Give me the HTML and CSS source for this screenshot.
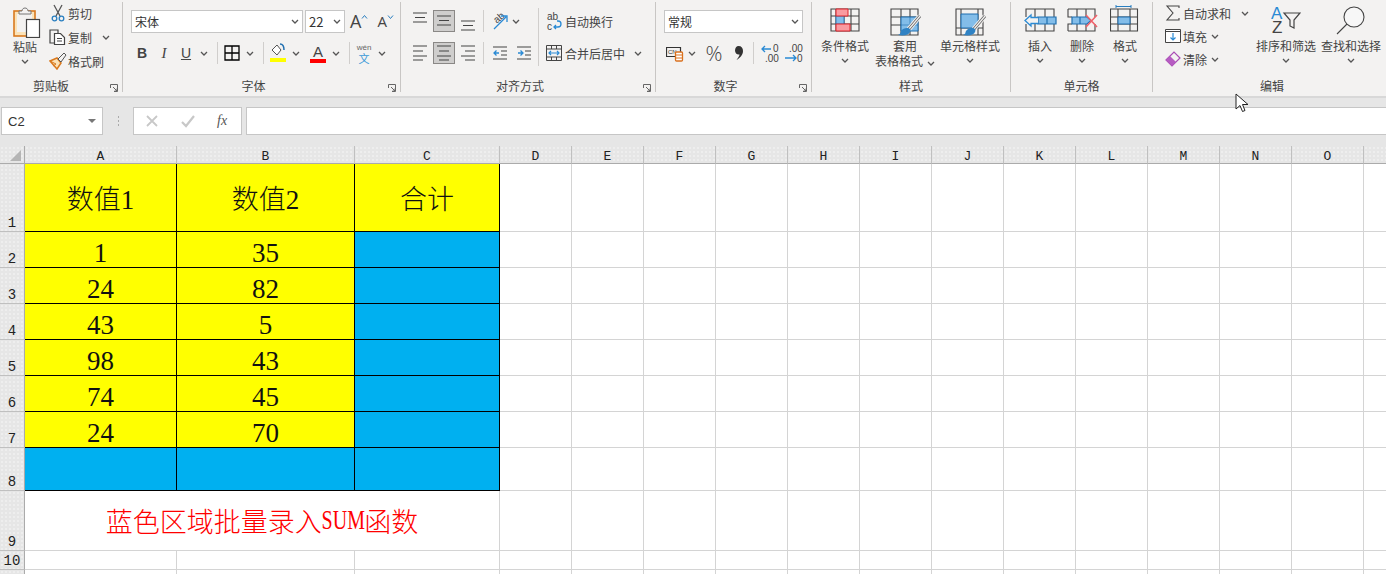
FILE: index.html
```html
<!DOCTYPE html>
<html lang="zh-CN">
<head>
    <meta charset="UTF-8">
    <meta name="viewport" content="width=device-width, initial-scale=1.0">
    <title>蓝色区域批量录入SUM函数</title>
    <link rel="stylesheet" href="styles.css">
</head>
<body>

<svg class="defs" aria-hidden="true">
    <symbol id="chev" viewBox="0 0 8 5"><path d="M1 1l3 3 3-3" fill="none" stroke="#555" stroke-width="1.3"/></symbol>
    <symbol id="launcher" viewBox="0 0 8 8"><path d="M.5 4V.5H7.5V7.5H4M3 3l4 4M7 4.500V7H4.500" fill="none" stroke="#666"/></symbol>
    <symbol id="brush" viewBox="0 0 34 34">
        <path d="M32 11L21 24" stroke="#f3f2f1" stroke-width="5"/>
        <path d="M32 11L21 24" stroke="#666" stroke-width="2.800"/>
        <path d="M32 11L21 24" stroke="#f3f2f1" stroke-width="1.200"/>
        <path d="M19 23c3 0 4 2 3 4-1 3-6 4-12 3 3-1 2-2 3-4 1-2 4-3 6-3z" fill="#2f82c4"/>
    </symbol>
</svg>

<!-- ribbon -->
<div class="ribbon">
    <section class="group group-clip">
        <div class="body row-body">
            <div class="big-btn paste-btn">
                <svg class="paste-icon" width="30" height="32" viewBox="0 0 30 32">
                    <rect x="2" y="5" width="21" height="25" fill="#fbe3b8" stroke="#d9791e" stroke-width="1.600"/>
                    <rect x="5" y="8" width="15" height="18" fill="#f3f2f1"/>
                    <path d="M7 8V5h3c0-4 6-4 6 0h3v3z" fill="#f3f2f1" stroke="#777"/>
                    <rect x="14.500" y="13.500" width="13" height="18" fill="#fff" stroke="#444" stroke-width="1.200"/>
                </svg>
                <span class="big-label">粘贴</span>
                <svg class="chev chev-big"><use href="#chev"/></svg>
            </div>
            <div class="clip-list">
                <div class="small-row">
                    <svg class="small-icon" width="18" height="18" viewBox="0 0 18 18">
                        <path d="M5 1l6 11M13 1L7 12" stroke="#555" stroke-width="1.300" fill="none"/>
                        <circle cx="5.500" cy="14.500" r="2.300" fill="none" stroke="#2a7fc0" stroke-width="1.300"/>
                        <circle cx="12.500" cy="14.500" r="2.300" fill="none" stroke="#2a7fc0" stroke-width="1.300"/>
                    </svg>
                    <span>剪切</span>
                </div>
                <div class="small-row">
                    <svg class="small-icon" width="18" height="18" viewBox="0 0 18 18">
                        <path d="M5 15H1V2h8v3" fill="none" stroke="#444" stroke-width="1.200"/>
                        <path d="M5.500 5.500h6l4 4v7h-10z" fill="#fff" stroke="#444" stroke-width="1.200"/>
                        <path d="M8 10.500h5M8 13h5" stroke="#444"/>
                    </svg>
                    <span>复制</span>
                    <svg class="chev chev-copy"><use href="#chev"/></svg>
                </div>
                <div class="small-row">
                    <svg class="small-icon" width="18" height="18" viewBox="0 0 18 18">
                        <path d="M1 9l7-3 4 5-4 6z" fill="#fbe3b8" stroke="#d9791e" stroke-width="1.500"/>
                        <path d="M1 9l6 3M4 14l3-2" stroke="#d9791e"/>
                        <path d="M9 7l6-6 2 2-5 7z" fill="#f3f2f1" stroke="#555"/>
                    </svg>
                    <span>格式刷</span>
                </div>
            </div>
        </div>
        <div class="group-label label-clip">剪贴板</div>
        <svg class="launcher"><use href="#launcher"/></svg>
    </section>

    <section class="group group-font">
        <div class="body col-body">
            <div class="tool-row">
                <div class="select font-name">宋体<svg class="chev"><use href="#chev"/></svg></div>
                <div class="select font-size">22<svg class="chev"><use href="#chev"/></svg></div>
                <span class="grow-a">A<svg width="7" height="4" viewBox="0 0 7 4"><path d="M1 3.500l2.500-3 2.500 3" fill="none" stroke="#2a7fc0"/></svg></span>
                <span class="shrink-a">A<svg width="7" height="4" viewBox="0 0 7 4"><path d="M1 .5l2.500 3 2.500-3" fill="none" stroke="#2a7fc0"/></svg></span>
            </div>
            <div class="tool-row">
                <span class="tool fmt-b">B</span>
                <span class="tool fmt-i">I</span>
                <span class="tool fmt-u">U</span>
                <svg class="chev tool-chev"><use href="#chev"/></svg>
                <span class="sep sep-a"></span>
                <span class="tool">
                    <svg width="16" height="16" viewBox="0 0 16 16"><path d="M1 1h14v14H1zM8 1v14M1 8h14" fill="none" stroke="#000" stroke-width="1.300"/></svg>
                </span>
                <svg class="chev tool-chev"><use href="#chev"/></svg>
                <span class="sep sep-a"></span>
                <span class="tool tool-fill">
                    <svg width="16" height="20" viewBox="0 0 16 20">
                        <path d="M2 7l5-5 4 5-4 5z" fill="#fff" stroke="#555"/>
                        <path d="M10 1c3 0 4 3 4 6" fill="none" stroke="#1f6fb0" stroke-width="1.500"/>
                        <rect y="15" width="16" height="4" fill="#ffff00"/>
                    </svg>
                </span>
                <svg class="chev tool-chev"><use href="#chev"/></svg>
                <span class="tool tool-color">
                    <span class="color-a">A</span>
                    <span class="color-bar"></span>
                </span>
                <svg class="chev tool-chev"><use href="#chev"/></svg>
                <span class="sep sep-b"></span>
                <span class="tool tool-wen">
                    <span class="wen-top">wén</span>
                    <span class="wen-bottom">文</span>
                </span>
                <svg class="chev tool-chev"><use href="#chev"/></svg>
            </div>
        </div>
        <div class="group-label label-dialog">字体</div>
        <svg class="launcher"><use href="#launcher"/></svg>
    </section>

    <section class="group group-align">
        <div class="body row-body">
            <div class="align-left">
                <div class="tool-row">
                    <span class="tool al"><svg width="14" height="22" viewBox="0 0 14 22"><path d="M0 3h14M2 7.500h10M0 12h14" stroke="#444" stroke-width="1.200"/></svg></span>
                    <span class="tool al active"><svg width="14" height="22" viewBox="0 0 14 22"><path d="M0 6h14M2 10.500h10M0 15h14" stroke="#444" stroke-width="1.200"/></svg></span>
                    <span class="tool al"><svg width="14" height="22" viewBox="0 0 14 22"><path d="M0 11h14M2 15.500h10M0 20h14" stroke="#444" stroke-width="1.200"/></svg></span>
                    <span class="sep sep-c"></span>
                    <span class="tool al">
                        <svg width="18" height="20" viewBox="0 0 18 20">
                            <text class="rot-text" x="3" y="11" transform="rotate(-40 7 8)">ab</text>
                            <path d="M3 18L15 6M10 5h6v6" fill="none" stroke="#2a8ad4" stroke-width="1.300"/>
                        </svg>
                    </span>
                    <svg class="chev chev-tight"><use href="#chev"/></svg>
                </div>
                <div class="tool-row">
                    <span class="tool al"><svg width="14" height="16" viewBox="0 0 14 16"><path d="M0 1h14M0 6h10M0 11h14M0 15h10" stroke="#444" stroke-width="1.200"/></svg></span>
                    <span class="tool al active"><svg width="14" height="16" viewBox="0 0 14 16"><path d="M0 1h14M2 6h10M0 11h14M2 15h10" stroke="#444" stroke-width="1.200"/></svg></span>
                    <span class="tool al"><svg width="14" height="16" viewBox="0 0 14 16"><path d="M0 1h14M4 6h10M0 11h14M4 15h10" stroke="#444" stroke-width="1.200"/></svg></span>
                    <span class="sep sep-c"></span>
                    <span class="tool al"><svg width="14" height="14" viewBox="0 0 14 14"><path d="M0 1h14M8 5h6M8 9h6M0 13h14" stroke="#444" stroke-width="1.200"/><path d="M6 7H1M3.500 4.500L1 7l2.500 2.500" fill="none" stroke="#2a8ad4" stroke-width="1.300"/></svg></span>
                    <span class="tool al"><svg width="14" height="14" viewBox="0 0 14 14"><path d="M0 1h14M8 5h6M8 9h6M0 13h14" stroke="#444" stroke-width="1.200"/><path d="M1 7h5M3.500 4.500L6 7 3.500 9.500" fill="none" stroke="#2a8ad4" stroke-width="1.300"/></svg></span>
                </div>
            </div>
            <span class="sep sep-tall"></span>
            <div class="align-right">
                <div class="tool-row">
                    <span class="merge-icon">
                        <svg width="18" height="22" viewBox="0 0 18 22">
                            <text class="wrap-text" x="2" y="10">ab</text>
                            <text class="wrap-text" x="2" y="20">c</text>
                            <path d="M9 17h4c4 0 4-6 0-6h-1M11 15l-2 2 2 2" fill="none" stroke="#2a8ad4" stroke-width="1.300"/>
                        </svg>
                    </span>
                    <span>自动换行</span>
                </div>
                <div class="tool-row">
                    <span class="merge-icon">
                        <svg width="16" height="16" viewBox="0 0 16 16">
                            <path d="M.5.5h15v15H.5zM.5 4h15M.5 12h15M5.500.5V4M10.500.5V4M5.500 12v3.500M10.500 12v3.500" fill="none" stroke="#444"/>
                            <path d="M3 8h10M5 6L3 8l2 2M11 6l2 2-2 2" fill="none" stroke="#2a8ad4" stroke-width="1.200"/>
                        </svg>
                    </span>
                    <span>合并后居中</span>
                    <svg class="chev chev-merge"><use href="#chev"/></svg>
                </div>
            </div>
        </div>
        <div class="group-label label-dialog">对齐方式</div>
        <svg class="launcher"><use href="#launcher"/></svg>
    </section>

    <section class="group group-number">
        <div class="body col-body">
            <div class="tool-row">
                <div class="select number-format">常规<svg class="chev"><use href="#chev"/></svg></div>
            </div>
            <div class="tool-row">
                <span class="tool">
                    <svg width="18" height="18" viewBox="0 0 18 18">
                        <path d="M.5 3.500h14v9H.5z" fill="none" stroke="#333" stroke-width="1.200"/>
                        <text class="money-text" x="2" y="10">CN</text>
                        <rect x="9.500" y="8" width="7" height="9" rx="1" fill="#fff" stroke="#d9701e" stroke-width="1.300"/>
                        <path d="M9.500 11h7M9.500 14h7" stroke="#d9701e"/>
                    </svg>
                </span>
                <svg class="chev chev-money"><use href="#chev"/></svg>
                <span class="tool percent">%</span>
                <span class="tool comma">
                    <svg width="10" height="16" viewBox="0 0 10 16"><path d="M4.500 1C7.500 1 9 3 9 6c0 4-3 7-6.500 9 1.500-2 3-4 3-5.500C3 10 1 8 1 5.500 1 3 2.500 1 4.500 1z" fill="#333"/></svg>
                </span>
                <span class="sep sep-d"></span>
                <span class="tool dec dec-first">
                    <svg width="20" height="22" viewBox="0 0 20 22">
                        <text class="dec-text" x="13" y="10">0</text>
                        <text class="dec-text" x="5" y="20">.00</text>
                        <path d="M11 7H2M5 4L2 7l3 3" fill="none" stroke="#2a8ad4" stroke-width="1.300"/>
                    </svg>
                </span>
                <span class="tool dec">
                    <svg width="20" height="22" viewBox="0 0 20 22">
                        <text class="dec-text" x="5" y="10">.00</text>
                        <text class="dec-text" x="13" y="20">0</text>
                        <path d="M1 16h11M9 13l3 3-3 3" fill="none" stroke="#2a8ad4" stroke-width="1.300"/>
                    </svg>
                </span>
            </div>
        </div>
        <div class="group-label label-dialog">数字</div>
        <svg class="launcher"><use href="#launcher"/></svg>
    </section>

    <section class="group group-styles">
        <div class="body row-body">
            <div class="big-btn w-66">
                <svg class="big-icon" width="30" height="34" viewBox="0 0 30 34">
                    <path d="M1 4h28v22H1zM1 11h28M1 19h28M6 4v22M14 11v8M21 4v22" fill="none" stroke="#444" stroke-width="1.100"/>
                    <path d="M6 11h8v8H6z" fill="#83bde9" stroke="#1f6fb0" stroke-width=".8"/>
                    <path d="M6 4h12v7H6zM6 19h14v7H6z" fill="#fa9aa0" stroke="#e0252d"/>
                </svg>
                <span class="big-label">条件格式</span>
                <svg class="chev chev-big"><use href="#chev"/></svg>
            </div>
            <div class="big-btn w-54">
                <svg class="big-icon" width="34" height="34" viewBox="0 0 34 34">
                    <path d="M3 4h27v26H3zM3 12h27M3 20h27M13 4v26M22 4v26" fill="none" stroke="#444" stroke-width="1.100"/>
                    <path d="M13 12h17v14H13z" fill="#83bde9" stroke="#1f6fb0"/>
                    <path d="M22 12v14M13 20h17" stroke="#1f6fb0" stroke-width=".6"/>
                    <use href="#brush" width="34" height="34"/>
                </svg>
                <span class="big-label">套用</span>
                <span class="big-label">表格格式<svg class="chev chev-inline"><use href="#chev"/></svg></span>
            </div>
            <div class="big-btn w-76">
                <svg class="big-icon" width="34" height="34" viewBox="0 0 34 34">
                    <path d="M3 4h27v26H3zM3 23h27M8 4v26M25 4v26" fill="none" stroke="#444" stroke-width="1.100"/>
                    <path d="M8 9h17v14H8z" fill="#83bde9" stroke="#1f6fb0"/>
                    <use href="#brush" width="34" height="34"/>
                </svg>
                <span class="big-label">单元格样式</span>
                <svg class="chev chev-big"><use href="#chev"/></svg>
            </div>
        </div>
        <div class="group-label">样式</div>
    </section>

    <section class="group group-cells">
        <div class="body row-body">
            <div class="big-btn w-42">
                <svg class="big-icon" width="34" height="34" viewBox="0 0 34 34">
                    <path d="M3 12V4h28v8M3 19v7h28v-7M12 4v8M22 4v22M12 19v7" fill="none" stroke="#444" stroke-width="1.100"/>
                    <path d="M15 12h18v7H15zM24 12v7" fill="#83bde9" stroke="#1f6fb0" stroke-width="1.200"/>
                    <path d="M15 12.500H8V10l-6 5.500L8 21v-2.500h7" fill="#f3f2f1" stroke="#2a8ad4" stroke-width="1.300"/>
                </svg>
                <span class="big-label">插入</span>
                <svg class="chev chev-big"><use href="#chev"/></svg>
            </div>
            <div class="big-btn w-42">
                <svg class="big-icon" width="34" height="34" viewBox="0 0 34 34">
                    <path d="M3 4h27v8M3 4v8h4M3 26v-7h4M3 26h27v-7M12 4v8M21 4v8M12 19v7M21 19v7" fill="none" stroke="#444" stroke-width="1.100"/>
                    <path d="M7 12h15l4 3.500-4 3.500H7zM15 12v7" fill="#83bde9" stroke="#1f6fb0" stroke-width="1.200"/>
                    <path d="M21 10l11 12M32 10L21 22" stroke="#f0626a" stroke-width="1.600"/>
                </svg>
                <span class="big-label">删除</span>
                <svg class="chev chev-big"><use href="#chev"/></svg>
            </div>
            <div class="big-btn w-44">
                <svg class="big-icon" width="30" height="34" viewBox="0 0 30 34">
                    <path d="M.5 4h27v22H.5zM.5 12h27M.5 19h27M8 4v22M20 4v22" fill="none" stroke="#444" stroke-width="1.100"/>
                    <path d="M8 12h12v7H8z" fill="#83bde9" stroke="#1f6fb0"/>
                    <path d="M6 0v3M21 0v3M6 1.500h15" stroke="#2a7fc0"/>
                </svg>
                <span class="big-label">格式</span>
                <svg class="chev chev-big"><use href="#chev"/></svg>
            </div>
        </div>
        <div class="group-label">单元格</div>
    </section>

    <section class="group group-edit">
        <div class="body row-body">
            <div class="edit-list">
                <div class="small-row">
                    <svg class="small-icon" width="16" height="16" viewBox="0 0 16 16"><path d="M14 3V1H2l6 7-6 7h12v-2" fill="none" stroke="#444" stroke-width="1.100"/></svg>
                    <span>自动求和</span>
                    <svg class="chev chev-sum"><use href="#chev"/></svg>
                </div>
                <div class="small-row">
                    <svg class="small-icon" width="16" height="16" viewBox="0 0 16 16"><path d="M.5 1.500h15v13H.5zM.5 3.500h15" fill="#fff" stroke="#444"/><path d="M8 5v7M5.500 9.500L8 12l2.500-2.500" fill="none" stroke="#2a8ad4" stroke-width="1.200"/></svg>
                    <span>填充</span>
                    <svg class="chev chev-fill"><use href="#chev"/></svg>
                </div>
                <div class="small-row">
                    <svg class="small-icon" width="16" height="16" viewBox="0 0 16 16"><path d="M1 9l8-8 6 6-8 8z" fill="#f3f2f1" stroke="#a94cb4" stroke-width="1.200"/><path d="M1 9l4-4 6 6-4 4z" fill="#b65cc2"/></svg>
                    <span>清除</span>
                    <svg class="chev chev-fill"><use href="#chev"/></svg>
                </div>
            </div>
            <div class="big-btn w-60">
                <svg class="big-icon" width="30" height="34" viewBox="0 0 30 34">
                    <text class="sort-a" x="0" y="14">A</text>
                    <text class="sort-z" x="1" y="28">Z</text>
                    <path d="M13 8h16l-6 7v8l-4-2v-6z" fill="#f3f2f1" stroke="#444" stroke-width="1.200"/>
                </svg>
                <span class="big-label">排序和筛选</span>
                <svg class="chev chev-big"><use href="#chev"/></svg>
            </div>
            <div class="big-btn w-60 find-btn">
                <svg class="big-icon" width="34" height="34" viewBox="0 0 34 34">
                    <circle cx="20" cy="12" r="10" fill="#f7f7f7" stroke="#444" stroke-width="1.100"/>
                    <path d="M13 19L3 29" stroke="#444" stroke-width="1.100"/>
                </svg>
                <span class="big-label">查找和选择</span>
                <svg class="chev chev-big"><use href="#chev"/></svg>
            </div>
        </div>
        <div class="group-label edit-label">编辑</div>
    </section>
</div>

<!-- formula bar -->
<div class="formula-area">
    <div class="name-box">C2<span class="name-arrow"></span></div>
    <div class="grip"></div>
    <div class="fx-box">
        <svg width="14" height="14" viewBox="0 0 14 14"><path d="M2 2l10 10M12 2L2 12" stroke="#c8c8c8" stroke-width="1.800"/></svg>
        <svg width="14" height="14" viewBox="0 0 14 14"><path d="M1 8l4 4 8-10" fill="none" stroke="#c8c8c8" stroke-width="2.200"/></svg>
        <span class="fx-label">fx</span>
    </div>
    <div class="formula-input"></div>
</div>

<!-- sheet -->
<div class="sheet">
    <div class="corner"><span class="corner-mark"></span></div>
    <div class="col-head">A</div>
    <div class="col-head">B</div>
    <div class="col-head">C</div>
    <div class="col-rest">
        <span>D</span><span>E</span><span>F</span><span>G</span><span>H</span><span>I</span><span>J</span>
        <span>K</span><span>L</span><span>M</span><span>N</span><span>O</span><span></span>
    </div>

    <div class="row-head">1</div>
    <div class="cell yellow title">数值1</div>
    <div class="cell yellow title">数值2</div>
    <div class="cell yellow title">合计</div>
    <div class="rest"></div>

    <div class="row-head">2</div>
    <div class="cell yellow">1</div>
    <div class="cell yellow">35</div>
    <div class="cell blue"></div>
    <div class="rest"></div>

    <div class="row-head">3</div>
    <div class="cell yellow">24</div>
    <div class="cell yellow">82</div>
    <div class="cell blue"></div>
    <div class="rest"></div>

    <div class="row-head">4</div>
    <div class="cell yellow">43</div>
    <div class="cell yellow">5</div>
    <div class="cell blue"></div>
    <div class="rest"></div>

    <div class="row-head">5</div>
    <div class="cell yellow">98</div>
    <div class="cell yellow">43</div>
    <div class="cell blue"></div>
    <div class="rest"></div>

    <div class="row-head">6</div>
    <div class="cell yellow">74</div>
    <div class="cell yellow">45</div>
    <div class="cell blue"></div>
    <div class="rest"></div>

    <div class="row-head">7</div>
    <div class="cell yellow">24</div>
    <div class="cell yellow">70</div>
    <div class="cell blue"></div>
    <div class="rest"></div>

    <div class="row-head">8</div>
    <div class="cell blue"></div>
    <div class="cell blue"></div>
    <div class="cell blue"></div>
    <div class="rest"></div>

    <div class="row-head">9</div>
    <div class="note">蓝色区域批量录入<span class="note-latin">SUM</span>函数</div>
    <div class="rest"></div>

    <div class="row-head">10</div>
    <div class="blank"></div>
    <div class="blank"></div>
    <div class="blank"></div>
    <div class="rest"></div>

    <div class="row-head"></div>
    <div class="blank"></div>
    <div class="blank"></div>
    <div class="blank"></div>
    <div class="rest"></div>
</div>

<svg class="cursor" width="14" height="20" viewBox="0 0 14 20">
    <path d="M1 1v15l4-3.500 2.500 6 2.500-1-2.500-6H13z" fill="#fff" stroke="#222"/>
</svg>

</body>
</html>
```

FILE: styles.css
```css
body {
    margin: 0;
    height: 574px;
    overflow: hidden;
    position: relative;
    background: #fff;
    color: #444;
    font-family: "Noto Sans CJK SC", "Noto Sans", sans-serif;
    font-size: 12px;
}
.defs {
    display: none;
}

/* ribbon */
.ribbon {
    display: flex;
    height: 96px;
    background: #f3f2f1;
}
.group {
    position: relative;
    box-sizing: border-box;
    height: 90px;
    margin-top: 2px;
    border-right: 1px solid #c8c6c4;
    flex: none;
}
.group-clip { width: 123px; }
.group-font { width: 278px; padding-left: 8px; }
.group-align { width: 255px; padding-left: 7px; }
.group-number { width: 156px; padding-left: 8px; }
.group-styles { width: 199px; }
.group-cells { width: 142px; padding-left: 8px; }
.group-edit { width: 233px; padding-left: 11px; border-right: none; }

.body {
    height: 76px;
}
.row-body {
    display: flex;
}
.col-body {
    display: flex;
    flex-direction: column;
    gap: 10px;
    padding-top: 8px;
    box-sizing: border-box;
}
.group-label {
    position: absolute;
    left: 0;
    right: 0;
    bottom: -2px;
    height: 16px;
    line-height: 16px;
    text-align: center;
}
.label-clip {
    right: 20px;
}
.label-dialog {
    right: 16px;
}
.edit-label {
    left: 5px;
}
.launcher {
    position: absolute;
    right: 4px;
    bottom: 0;
    width: 8px;
    height: 8px;
}

.chev {
    width: 8px;
    height: 5px;
    flex: none;
}
.big-btn {
    display: flex;
    flex-direction: column;
    align-items: center;
    flex: none;
    padding-top: 3px;
    box-sizing: border-box;
    white-space: nowrap;
}
.big-icon {
    flex: none;
    margin-bottom: -1px;
}
.big-label {
    line-height: 15px;
    height: 15px;
}
.chev-big { margin-top: 5px; }
.chev-inline { margin-left: 4px; }
.w-42 { width: 42px; }
.w-44 { width: 44px; }
.w-54 { width: 54px; }
.w-60 { width: 60px; }
.w-66 { width: 66px; }
.w-76 { width: 76px; }

.paste-btn {
    width: 50px;
}
.paste-icon {
    margin: 1px 0 1px 4px;
}
.clip-list {
    display: flex;
    flex-direction: column;
    gap: 2px;
    margin-left: -1px;
}
.small-row {
    display: flex;
    align-items: center;
    height: 22px;
    white-space: nowrap;
}
.small-icon {
    flex: none;
    width: 18px;
    margin-right: 1px;
}
.chev-copy { margin-left: 10px; }
.chev-sum { margin-left: 10px; }
.chev-fill { margin-left: 4px; }

.tool-row {
    display: flex;
    align-items: center;
    height: 22px;
    white-space: nowrap;
}
.select {
    display: flex;
    align-items: center;
    justify-content: space-between;
    box-sizing: border-box;
    height: 23px;
    padding: 0 3px;
    background: #fff;
    border: 1px solid #c6c6c6;
    color: #333;
}
.font-name { width: 172px; }
.font-size { width: 40px; margin-left: 2px; font-size: 13px; }
.number-format { width: 139px; }
.grow-a, .shrink-a {
    display: flex;
    align-items: flex-start;
    font-family: "Open Sans", sans-serif;
    font-size: 16px;
    line-height: 20px;
}
.grow-a { margin-left: 5px; font-size: 18px; }
.shrink-a { margin-left: 9px; font-size: 15px; }
.grow-a svg, .shrink-a svg { margin-top: 4px; }

.tool {
    display: flex;
    align-items: center;
    justify-content: center;
    width: 22px;
    height: 22px;
    flex: none;
    box-sizing: border-box;
}
.tool-chev {
    width: 8px;
    margin: 0 3px;
}
.sep {
    display: block;
    width: 1px;
    height: 22px;
    background: #d0cecc;
    flex: none;
}
.sep-a { margin: 0 3px 0 6px; }
.sep-b { margin: 0 3px 0 6px; }
.sep-c { margin: 0 4px 0 3px; }
.sep-d { margin: 0 3px; }
.sep-tall {
    height: 58px;
    margin-top: 6px;
}
.fmt-b {
    font-family: "Liberation Sans", sans-serif;
    font-weight: bold;
    font-size: 14px;
}
.fmt-i {
    font-family: "Liberation Serif", serif;
    font-style: italic;
    font-size: 15px;
}
.fmt-u {
    font-family: "Liberation Sans", sans-serif;
    font-size: 14px;
    text-decoration: underline;
}
.tool-color {
    flex-direction: column;
    margin-left: 4px;
}
.color-a {
    font-family: "Liberation Sans", sans-serif;
    font-size: 15px;
    line-height: 15px;
}
.color-bar {
    width: 16px;
    height: 4px;
    background: #ff0000;
}
.tool-wen {
    flex-direction: column;
}
.wen-top {
    font-size: 8px;
    line-height: 9px;
    color: #666;
    font-family: "Liberation Sans", sans-serif;
}
.wen-bottom {
    font-size: 11px;
    line-height: 12px;
    color: #3b9ad8;
}

.align-left {
    display: flex;
    flex-direction: column;
    gap: 10px;
    padding-top: 8px;
    width: 130px;
    flex: none;
}
.al {
    margin: 0 1px;
}
.active {
    background: #cfcecd;
    border: 1px solid #8a8886;
}
.chev-tight { margin-left: 0; }
.align-right {
    display: flex;
    flex-direction: column;
    gap: 10px;
    padding: 8px 0 0 6px;
    font-size: 12px;
}
.merge-icon {
    display: flex;
    justify-content: center;
    width: 18px;
    margin-right: 2px;
}
.chev-merge { margin-left: 9px; }
.rot-text {
    font-family: "Liberation Sans", sans-serif;
    font-size: 10px;
    fill: #444;
}
.wrap-text {
    font-family: "Liberation Sans", sans-serif;
    font-size: 10px;
    fill: #444;
}
.money-text {
    font-family: "Liberation Sans", sans-serif;
    font-size: 6px;
    fill: #333;
}
.dec-text {
    font-family: "Liberation Sans", sans-serif;
    font-size: 10px;
    fill: #444;
}
.chev-money { margin-left: 2px; }
.percent {
    margin-left: 7px;
    font-family: "Open Sans", sans-serif;
    font-weight: 300;
    font-size: 21px;
}
.comma {
    margin-left: 3px;
}
.dec-first { margin-left: 1px; }
.dec { margin-left: 2px; }

.edit-list {
    display: flex;
    flex-direction: column;
    gap: 1px;
    width: 92px;
    flex: none;
}
.find-btn {
    margin-left: 5px;
}
.sort-a {
    font-family: "Liberation Sans", sans-serif;
    font-size: 17px;
    fill: #2a8ad4;
}
.sort-z {
    font-family: "Liberation Sans", sans-serif;
    font-size: 17px;
    fill: #444;
}

/* formula bar */
.formula-area {
    display: flex;
    height: 50px;
    box-sizing: border-box;
    padding: 9px 0 11px 1px;
    background: #e6e6e6;
    border-top: 2px solid #d8d8d8;
}
.name-box, .fx-box, .formula-input {
    box-sizing: border-box;
    height: 28px;
    background: #fff;
    border: 1px solid #c6c6c6;
}
.name-box {
    display: flex;
    align-items: center;
    justify-content: space-between;
    width: 102px;
    padding: 0 6px;
    font-family: "Liberation Sans", sans-serif;
    font-size: 13px;
    color: #333;
}
.name-arrow {
    width: 0;
    height: 0;
    border-left: 4px solid transparent;
    border-right: 4px solid transparent;
    border-top: 4px solid #777;
}
.grip {
    width: 30px;
    height: 14px;
    margin-top: 7px;
    background: radial-gradient(circle, #aaa 1px, transparent 1px) center / 3px 4px repeat-y;
}
.fx-box {
    display: flex;
    align-items: center;
    gap: 22px;
    width: 109px;
    padding-left: 11px;
}
.fx-label {
    width: 14px;
    font-family: "Liberation Serif", serif;
    font-style: italic;
    font-size: 14px;
    color: #555;
}
.formula-input {
    flex: 1;
    margin-left: 4px;
    border-right: none;
}

/* sheet */
.sheet {
    display: grid;
    grid-template-columns: 25px 152px 178px 145px 1fr;
    grid-template-rows: 18px 68px repeat(6, 36px) 43px 60px 19px 20px;
    font-family: "Liberation Serif", "Noto Sans CJK SC", serif;
    font-size: 27px;
    color: #111;
}
.corner, .col-head, .col-rest, .row-head {
    background-color: #e6e6e6;
    background-image: radial-gradient(#eeeeee 1px, transparent 1px);
    background-size: 4px 4px;
    font-family: "Liberation Mono", monospace;
    font-size: 13px;
    color: #222;
    box-sizing: border-box;
}
.corner {
    position: relative;
    border-right: 1px solid #ababab;
    border-bottom: 1px solid #ababab;
}
.corner-mark {
    position: absolute;
    right: 3px;
    bottom: 2px;
    border-style: solid;
    border-width: 0 0 11px 11px;
    border-color: transparent transparent #b5b5b5 transparent;
}
.col-head, .col-rest span {
    display: flex;
    align-items: center;
    justify-content: center;
    box-sizing: border-box;
    padding-top: 3px;
    border-right: 1px solid #c0c0c0;
    border-bottom: 1px solid #ababab;
}
.col-rest {
    display: flex;
}
.col-rest span {
    width: 72px;
    flex: none;
}
.row-head {
    display: flex;
    align-items: flex-end;
    justify-content: center;
    border-right: 1px solid #ababab;
    border-bottom: 1px solid #c0c0c0;
    line-height: 16px;
    font-size: 14px;
}
.cell {
    display: flex;
    align-items: flex-end;
    justify-content: center;
    box-sizing: border-box;
    border-right: 1px solid #000;
    border-bottom: 1px solid #000;
    line-height: 28px;
}
.title {
    align-items: center;
    padding-top: 4px;
    font-weight: 300;
}
.yellow {
    background: #ffff00;
}
.blue {
    background: #00b0f0;
}
.note {
    grid-column: 2 / span 3;
    display: flex;
    align-items: center;
    justify-content: center;
    box-sizing: border-box;
    border-right: 1px solid #d4d4d4;
    border-bottom: 1px solid #d4d4d4;
    color: #ff0000;
    font-weight: 300;
}
.note-latin {
    display: inline-block;
    margin: 0 -8px;
    transform: scaleX(.74);
}
.blank {
    box-sizing: border-box;
    border-right: 1px solid #d4d4d4;
    border-bottom: 1px solid #d4d4d4;
}
.rest {
    box-sizing: border-box;
    border-bottom: 1px solid #d4d4d4;
    background: repeating-linear-gradient(to right, #fff 0, #fff 71px, #d4d4d4 71px, #d4d4d4 72px);
}

.cursor {
    position: absolute;
    left: 1235px;
    top: 93px;
}
```
